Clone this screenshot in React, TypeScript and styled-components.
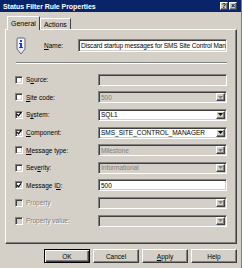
import styled, { createGlobalStyle } from "styled-components";

const GlobalStyle = createGlobalStyle`
  html, body {
    margin: 0;
    padding: 0;
    background: #d4d0c8;
  }
  body {
    font-family: "Liberation Sans", Arial, sans-serif;
    font-size: 6.5px;
    color: #000000;
  }
`;

const sunken = `
  border: 1px solid;
  border-color: #808080 #ffffff #ffffff #808080;
  box-shadow: inset 1px 1px #404040, inset -1px -1px #d4d0c8;
`;

const raised = `
  border: 1px solid;
  border-color: #ffffff #404040 #404040 #ffffff;
  box-shadow: inset -1px -1px #808080;
  background: #d4d0c8;
`;

interface FieldRow {
  label: string;
  key: number;
  checked: boolean;
  disabled?: boolean;
  value?: string;
  kind: "text" | "combo";
  active: boolean;
}

const rows: FieldRow[] = [
  { label: "Source:", key: 1, checked: false, kind: "text", active: false },
  { label: "Site code:", key: 0, checked: false, kind: "combo", value: "500", active: false },
  { label: "System:", key: 1, checked: true, kind: "combo", value: "SQL1", active: true },
  { label: "Component:", key: 0, checked: true, kind: "combo", value: "SMS_SITE_CONTROL_MANAGER", active: true },
  { label: "Message type:", key: 0, checked: false, kind: "combo", value: "Milestone", active: false },
  { label: "Severity:", key: 3, checked: false, kind: "combo", value: "Informational", active: false },
  { label: "Message ID:", key: 9, checked: true, kind: "text", value: "500", active: true },
  { label: "Property", key: -1, checked: false, disabled: true, kind: "combo", active: false },
  { label: "Property value:", key: -1, checked: false, disabled: true, kind: "combo", active: false },
];

function Access({ text, index }: { text: string; index: number }) {
  if (index < 0) return <>{text}</>;
  return (
    <>
      {text.slice(0, index)}
      <u>{text[index]}</u>
      {text.slice(index + 1)}
    </>
  );
}

function ArrowGlyph({ dim }: { dim: boolean }) {
  return (
    <svg width="5" height="3" viewBox="0 0 5 3">
      <path d="M0 0H5L2.5 3Z" fill={dim ? "#808080" : "#000000"} />
    </svg>
  );
}

function RuleIcon() {
  return (
    <svg width="10" height="18" viewBox="0 0 10 18">
      <path d="M1 2Q1 1 2 1H8Q9 1 9 2V12L5 17L1 12Z" fill="#e8e8f0" stroke="#6a6a78" strokeWidth="1" />
      <path d="M2 2H8V11H2Z" fill="#f4f4ff" />
      <rect x="4" y="3" width="2" height="2" fill="#1a3ed8" />
      <rect x="4" y="6" width="2" height="5" fill="#1a3ed8" />
      <rect x="3" y="6" width="1" height="1" fill="#1a3ed8" />
      <rect x="3" y="10" width="4" height="1" fill="#1a3ed8" />
    </svg>
  );
}

export default function App() {
  return (
    <>
      <GlobalStyle />
      <Window>
        <TitleBar>
          <Title>Status Filter Rule Properties</Title>
          <TitleButtons>
            <CaptionButton>?</CaptionButton>
            <CaptionButton>×</CaptionButton>
          </TitleButtons>
        </TitleBar>
        <Body>
          <Tabs>
            <Tab $active>General</Tab>
            <Tab>Actions</Tab>
          </Tabs>
          <Panel>
            <NameRow>
              <IconBox>
                <RuleIcon />
              </IconBox>
              <NameLabel>
                <Access text="Name:" index={0} />
              </NameLabel>
              <NameInput>Discard startup messages for SMS Site Control Man</NameInput>
            </NameRow>
            <Separator />
            <Criteria>
              {rows.map((row) => (
                <CriteriaRow key={row.label}>
                  <Check $disabled={!!row.disabled}>
                    {row.checked && (
                      <svg width="7" height="7" viewBox="0 0 7 7">
                        <path d="M1 3L3 5L6 1" fill="none" stroke="#000" strokeWidth="1.4" />
                      </svg>
                    )}
                  </Check>
                  <Label $disabled={!!row.disabled}>
                    <Access text={row.label} index={row.key} />
                  </Label>
                  <Field $active={row.active}>
                    <FieldText $active={row.active}>{row.value}</FieldText>
                    {row.kind === "combo" && (
                      <DropButton>
                        <ArrowGlyph dim={!row.active} />
                      </DropButton>
                    )}
                  </Field>
                </CriteriaRow>
              ))}
            </Criteria>
          </Panel>
          <ButtonBar>
            <DialogButton $default>OK</DialogButton>
            <DialogButton>Cancel</DialogButton>
            <DialogButton>
              <Access text="Apply" index={0} />
            </DialogButton>
            <DialogButton>Help</DialogButton>
          </ButtonBar>
        </Body>
      </Window>
    </>
  );
}

const Window = styled.div`
  width: 242px;
  height: 268px;
  box-sizing: border-box;
  background: #d4d0c8;
  display: flex;
  flex-direction: column;
  overflow: hidden;
  border-right: 1px solid #808080;
`;

const TitleBar = styled.div`
  height: 12px;
  background: #0a246a;
  display: flex;
  align-items: center;
  justify-content: space-between;
  padding: 0 4px 0 3px;
`;

const Title = styled.span`
  color: #ffffff;
  font-weight: bold;
  font-size: 7px;
  letter-spacing: -0.05px;
`;

const TitleButtons = styled.div`
  display: flex;
  gap: 1px;
`;

const CaptionButton = styled.div`
  ${raised}
  width: 6px;
  height: 6px;
  font-size: 7px;
  font-weight: bold;
  line-height: 6px;
  text-align: center;
  color: #000000;
`;

const Body = styled.div`
  flex: 1;
  display: flex;
  flex-direction: column;
  padding: 4px 4px 0 5px;
`;

const Tabs = styled.div`
  display: flex;
  align-items: flex-end;
  height: 13px;
  padding-left: 2px;
  position: relative;
  z-index: 1;
`;

const Tab = styled.div<{ $active?: boolean }>`
  height: ${(p) => (p.$active ? 14 : 11)}px;
  box-sizing: border-box;
  padding: 0 ${(p) => (p.$active ? 3 : 3)}px;
  display: flex;
  align-items: center;
  border: 1px solid;
  border-bottom: none;
  border-color: #ffffff #404040 #404040 #ffffff;
  background: #d4d0c8;
  margin-bottom: ${(p) => (p.$active ? -1 : 0)}px;
  font-size: 7px;
`;

const Panel = styled.div`
  height: 215px;
  box-sizing: border-box;
  border: 1px solid;
  border-color: #ffffff #404040 #404040 #ffffff;
  box-shadow: inset -1px -1px #808080;
  padding: 7px 9px 0 9px;
  display: flex;
  flex-direction: column;
`;

const NameRow = styled.div`
  display: flex;
  align-items: center;
  height: 17px;
`;

const IconBox = styled.div`
  width: 28px;
  padding-left: 1px;
  display: flex;
  align-items: center;
`;

const NameLabel = styled.span`
  width: 34px;
`;

const NameInput = styled.div`
  ${sunken}
  flex: 1;
  height: 13px;
  box-sizing: border-box;
  background: #ffffff;
  padding: 0 1px 0 2px;
  line-height: 11px;
  letter-spacing: -0.12px;
  white-space: nowrap;
  overflow: hidden;
`;

const Separator = styled.div`
  margin: 8px 0 0 1px;
  height: 0;
  border-top: 1px solid #808080;
  border-bottom: 1px solid #ffffff;
`;

const Criteria = styled.div`
  display: flex;
  flex-direction: column;
  margin-top: 7px;
`;

const CriteriaRow = styled.div`
  display: flex;
  align-items: center;
  height: 17.6px;
`;

const Check = styled.div<{ $disabled: boolean }>`
  ${sunken}
  width: 8px;
  height: 8px;
  box-sizing: border-box;
  background: ${(p) => (p.$disabled ? "#d4d0c8" : "#ffffff")};
  display: flex;
  align-items: center;
  justify-content: center;
  margin-right: 3px;
`;

const Label = styled.span<{ $disabled: boolean }>`
  width: 72px;
  color: ${(p) => (p.$disabled ? "#808080" : "#000000")};
  text-shadow: ${(p) => (p.$disabled ? "1px 1px #ffffff" : "none")};
`;

const Field = styled.div<{ $active: boolean }>`
  ${sunken}
  flex: 1;
  height: 12px;
  box-sizing: border-box;
  background: ${(p) => (p.$active ? "#ffffff" : "#d4d0c8")};
  display: flex;
  align-items: center;
  padding: 0 1px 0 2px;
`;

const FieldText = styled.span<{ $active: boolean }>`
  flex: 1;
  line-height: 9px;
  color: ${(p) => (p.$active ? "#000000" : "#808080")};
  white-space: nowrap;
`;

const DropButton = styled.div`
  ${raised}
  width: 9px;
  height: 8px;
  box-sizing: border-box;
  display: flex;
  align-items: center;
  justify-content: center;
`;

const ButtonBar = styled.div`
  display: flex;
  justify-content: flex-end;
  gap: 3px;
  margin-top: 5px;
`;

const DialogButton = styled.div<{ $default?: boolean }>`
  width: 46px;
  height: 14px;
  box-sizing: border-box;
  background: #d4d0c8;
  display: flex;
  align-items: center;
  justify-content: center;
  font-size: 6.5px;
  border: 1px solid;
  border-color: ${(p) => (p.$default ? "#000000" : "#ffffff #404040 #404040 #ffffff")};
  box-shadow: ${(p) =>
    p.$default
      ? "inset 1px 1px #ffffff, inset -1px -1px #404040, inset -2px -2px #808080"
      : "inset -1px -1px #808080"};
`;
